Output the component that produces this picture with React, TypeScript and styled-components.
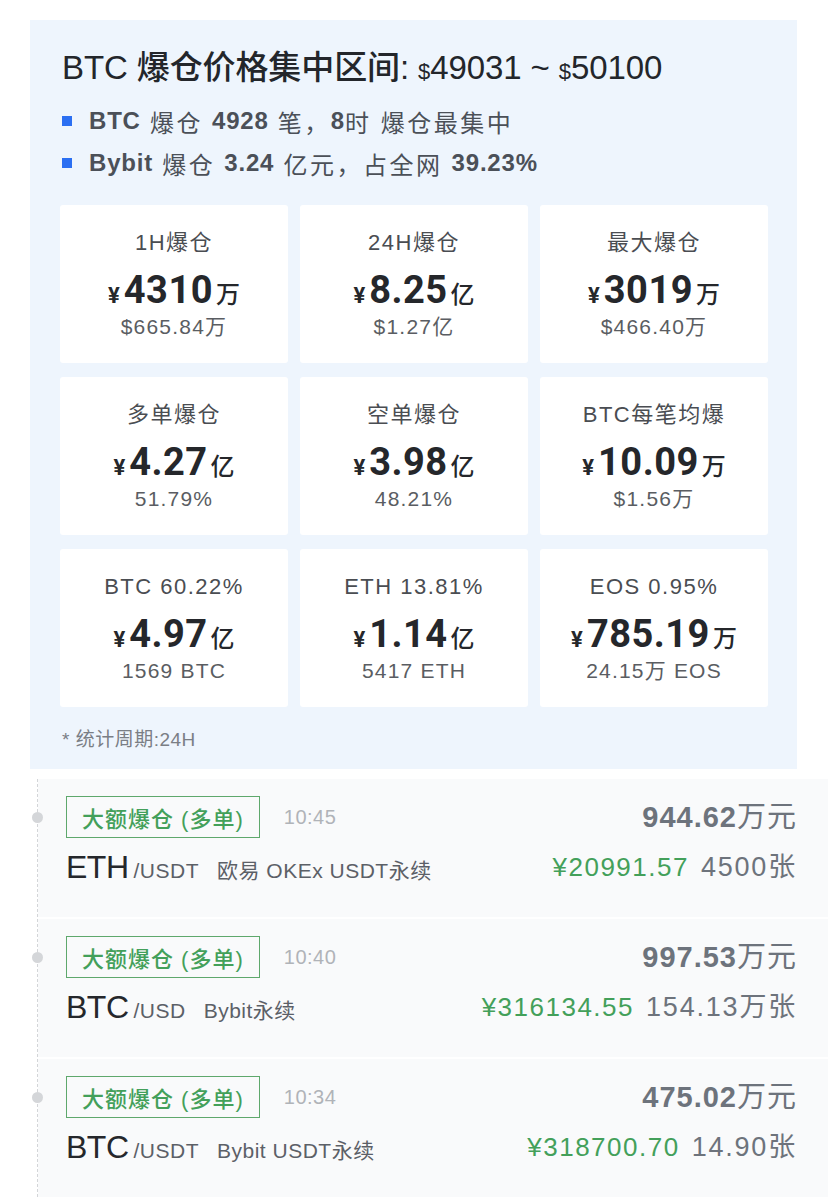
import React from 'react';
import styled, { createGlobalStyle } from 'styled-components';

const GlobalStyle = createGlobalStyle`
  body {
    margin: 0;
    background: #ffffff;
    font-family: 'Liberation Sans', 'Noto Sans CJK SC', sans-serif;
    color: #222;
  }
`;

const colors = {
  panel: '#eef5fd',
  title: '#23262b',
  text: '#4b5058',
  label: '#4a4d52',
  sub: '#5a5d62',
  blue: '#2b6ff2',
  green: '#43a05a',
  greenBorder: '#5ea86c',
  muted: '#6d737c',
  time: '#b0b3b8',
  rowBg: '#f9fafb',
};

const Page = styled.div({
  width: 828,
  paddingTop: 20,
  paddingBottom: 20,
});

const Panel = styled.section({
  marginLeft: 30,
  width: 767,
  boxSizing: 'border-box',
  padding: '28px 29px 14px 30px',
  background: colors.panel,
});

const Title = styled.h1({
  margin: '0 0 8px 2px',
  fontSize: 33,
  lineHeight: '40px',
  fontWeight: 500,
  letterSpacing: -0.1,
  color: colors.title,
  whiteSpace: 'nowrap',
});

const Dollar = styled.span({
  fontSize: 22,
});

const BulletList = styled.ul({
  margin: 0,
  padding: 0,
  listStyle: 'none',
});

const Bullet = styled.li({
  display: 'flex',
  alignItems: 'center',
  height: 42,
  fontSize: 24,
  letterSpacing: 2.5,
  color: colors.text,
  whiteSpace: 'pre',
  '&::before': {
    content: '""',
    width: 10,
    height: 10,
    marginLeft: 2,
    marginRight: 17,
    background: colors.blue,
  },
});

const Strong = styled.b({
  fontWeight: 700,
  letterSpacing: 0.8,
});

const Grid = styled.div({
  display: 'grid',
  gridTemplateColumns: 'repeat(3, 228px)',
  gridAutoRows: 158,
  columnGap: 12,
  rowGap: 14,
  marginTop: 21,
});

const Card = styled.div({
  background: '#ffffff',
  borderRadius: 3,
  display: 'flex',
  flexDirection: 'column',
  alignItems: 'center',
  paddingTop: 23,
  boxSizing: 'border-box',
});

const CardLabel = styled.div({
  fontSize: 22,
  lineHeight: '30px',
  color: colors.label,
  letterSpacing: 1.5,
});

const CardValue = styled.div({
  display: 'flex',
  alignItems: 'baseline',
  marginTop: 10,
  height: 44,
  lineHeight: '44px',
  color: '#25272b',
});

const Yen = styled.span({
  fontFamily: 'Roboto, sans-serif',
  fontSize: 22,
  fontWeight: 700,
  marginRight: 4,
});

const Amount = styled.span({
  fontFamily: 'Roboto, sans-serif',
  fontSize: 38,
  fontWeight: 700,
  letterSpacing: 0.5,
});

const Unit = styled.span({
  fontSize: 24,
  fontWeight: 500,
  marginLeft: 3,
});

const CardSub = styled.div({
  fontSize: 21,
  lineHeight: '30px',
  color: colors.sub,
  letterSpacing: 1.2,
});

const Footnote = styled.div({
  marginTop: 18,
  marginLeft: 2,
  fontSize: 19,
  lineHeight: '30px',
  letterSpacing: 0.5,
  color: '#7a7e85',
});

const Timeline = styled.div({
  marginLeft: 37,
  marginTop: 10,
  borderLeft: '1px dashed #d3d5d8',
});

const Row = styled.div({
  position: 'relative',
  display: 'flex',
  justifyContent: 'space-between',
  height: 138,
  marginBottom: 2,
  boxSizing: 'border-box',
  padding: '17px 31px 0 28px',
  background: colors.rowBg,
});

const Dot = styled.span({
  position: 'absolute',
  left: -6,
  top: 33,
  width: 11,
  height: 11,
  borderRadius: '50%',
  background: '#d4d6d9',
});

const Left = styled.div({
  display: 'flex',
  flexDirection: 'column',
});

const TagLine = styled.div({
  display: 'flex',
  alignItems: 'center',
  height: 42,
});

const Tag = styled.span({
  display: 'inline-flex',
  alignItems: 'center',
  height: 42,
  boxSizing: 'border-box',
  padding: '0 15px',
  border: `1px solid ${colors.greenBorder}`,
  color: colors.green,
  fontSize: 22,
  fontWeight: 500,
  letterSpacing: 1,
});

const Time = styled.span({
  marginLeft: 24,
  fontSize: 20,
  letterSpacing: 0.5,
  color: colors.time,
});

const PairLine = styled.div({
  display: 'flex',
  alignItems: 'baseline',
  marginTop: 9,
  height: 40,
  lineHeight: '40px',
  whiteSpace: 'pre',
});

const Symbol = styled.span({
  fontSize: 32,
  color: '#25272b',
  letterSpacing: -0.5,
});

const Quote = styled.span({
  fontSize: 21,
  color: '#5c6067',
  marginLeft: 5,
  letterSpacing: 0.5,
});

const Exchange = styled.span({
  fontSize: 21,
  color: '#5c6067',
  marginLeft: 18,
  letterSpacing: 0.5,
});

const Right = styled.div({
  display: 'flex',
  flexDirection: 'column',
  alignItems: 'flex-end',
});

const Total = styled.div({
  height: 42,
  lineHeight: '42px',
  fontSize: 29,
  letterSpacing: 1,
  color: colors.muted,
});

const TotalNum = styled.b({
  fontWeight: 700,
});

const PriceLine = styled.div({
  display: 'flex',
  alignItems: 'baseline',
  marginTop: 9,
  height: 40,
  lineHeight: '40px',
  whiteSpace: 'pre',
});

const Price = styled.span({
  fontSize: 26,
  letterSpacing: 1.5,
  color: colors.green,
  marginRight: 12,
});

const Size = styled.span({
  fontSize: 27,
  letterSpacing: 1.8,
  color: colors.muted,
});

const stats = [
  { label: '1H爆仓', amount: '4310', unit: '万', sub: '$665.84万' },
  { label: '24H爆仓', amount: '8.25', unit: '亿', sub: '$1.27亿' },
  { label: '最大爆仓', amount: '3019', unit: '万', sub: '$466.40万' },
  { label: '多单爆仓', amount: '4.27', unit: '亿', sub: '51.79%' },
  { label: '空单爆仓', amount: '3.98', unit: '亿', sub: '48.21%' },
  { label: 'BTC每笔均爆', amount: '10.09', unit: '万', sub: '$1.56万' },
  { label: 'BTC 60.22%', amount: '4.97', unit: '亿', sub: '1569 BTC' },
  { label: 'ETH 13.81%', amount: '1.14', unit: '亿', sub: '5417 ETH' },
  { label: 'EOS 0.95%', amount: '785.19', unit: '万', sub: '24.15万 EOS' },
];

const orders = [
  { time: '10:45', symbol: 'ETH', quote: '/USDT', exchange: '欧易 OKEx USDT永续', total: '944.62', price: '¥20991.57', size: '4500张' },
  { time: '10:40', symbol: 'BTC', quote: '/USD', exchange: 'Bybit永续', total: '997.53', price: '¥316134.55', size: '154.13万张' },
  { time: '10:34', symbol: 'BTC', quote: '/USDT', exchange: 'Bybit USDT永续', total: '475.02', price: '¥318700.70', size: '14.90张' },
];

export default function App() {
  return (
    <Page>
      <GlobalStyle />
      <Panel>
        <Title>
          BTC 爆仓价格集中区间: <Dollar>$</Dollar>49031 ~ <Dollar>$</Dollar>50100
        </Title>
        <BulletList>
          <Bullet>
            <Strong>BTC</Strong> 爆仓 <Strong>4928</Strong> 笔，<Strong>8</Strong>时 爆仓最集中
          </Bullet>
          <Bullet>
            <Strong>Bybit</Strong> 爆仓 <Strong>3.24</Strong> 亿元，占全网 <Strong>39.23%</Strong>
          </Bullet>
        </BulletList>
        <Grid>
          {stats.map((s) => (
            <Card key={s.label}>
              <CardLabel>{s.label}</CardLabel>
              <CardValue>
                <Yen>¥</Yen>
                <Amount>{s.amount}</Amount>
                <Unit>{s.unit}</Unit>
              </CardValue>
              <CardSub>{s.sub}</CardSub>
            </Card>
          ))}
        </Grid>
        <Footnote>* 统计周期:24H</Footnote>
      </Panel>
      <Timeline>
        {orders.map((o) => (
          <Row key={o.time}>
            <Dot />
            <Left>
              <TagLine>
                <Tag>大额爆仓 (多单)</Tag>
                <Time>{o.time}</Time>
              </TagLine>
              <PairLine>
                <Symbol>{o.symbol}</Symbol>
                <Quote>{o.quote}</Quote>
                <Exchange>{o.exchange}</Exchange>
              </PairLine>
            </Left>
            <Right>
              <Total>
                <TotalNum>{o.total}</TotalNum>万元
              </Total>
              <PriceLine>
                <Price>{o.price}</Price>
                <Size>{o.size}</Size>
              </PriceLine>
            </Right>
          </Row>
        ))}
      </Timeline>
    </Page>
  );
}
